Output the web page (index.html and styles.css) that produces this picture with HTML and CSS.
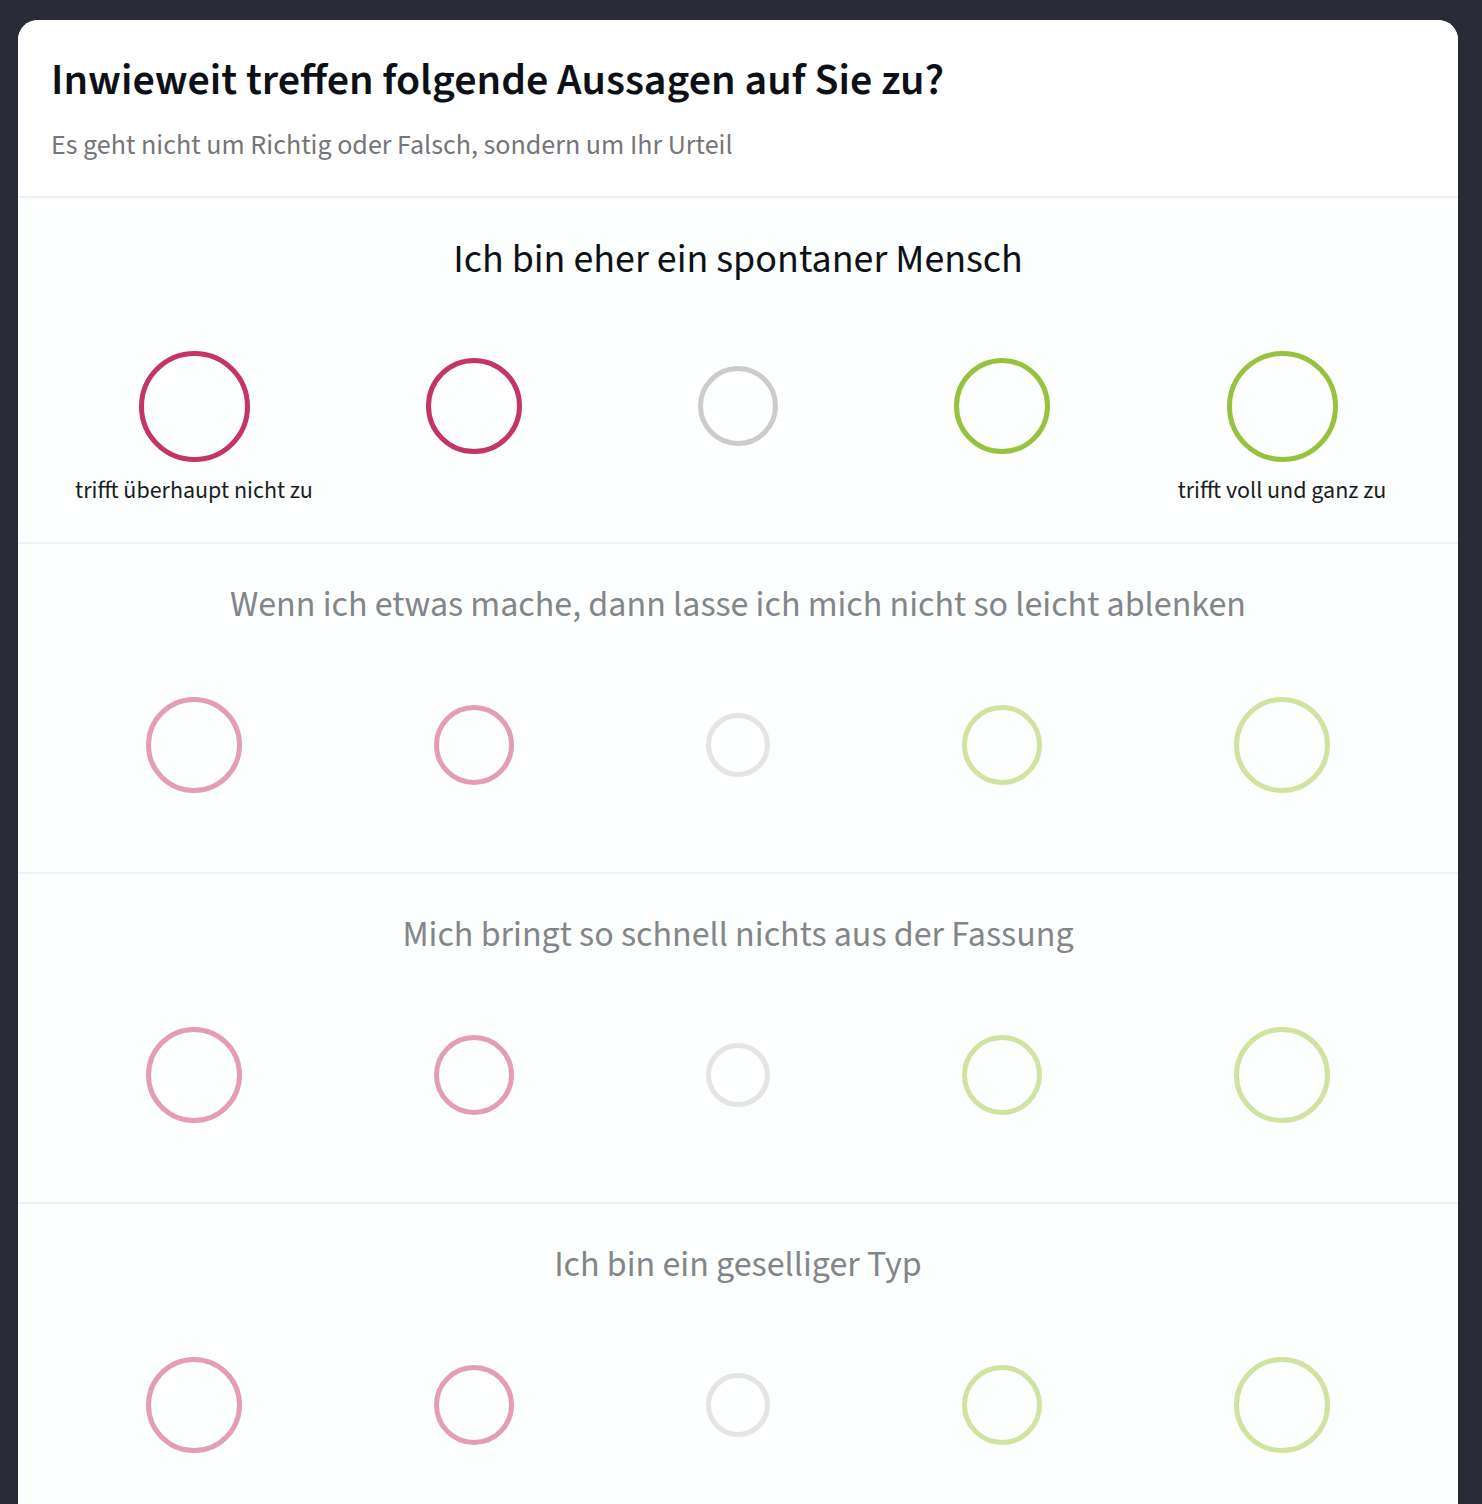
FILE: index.html
```html
<!DOCTYPE html>
<html lang="de">
<head>
<meta charset="utf-8">
<title>Fragebogen</title>
<link rel="stylesheet" href="styles.css">
</head>
<body>
<main class="card">
  <header class="card-head">
    <h1 class="title">Inwieweit treffen folgende Aussagen auf Sie zu?</h1>
    <p class="subtitle">Es geht nicht um Richtig oder Falsch, sondern um Ihr Urteil</p>
  </header>

  <section class="q q--active">
    <h2 class="q-text">Ich bin eher ein spontaner Mensch</h2>
    <div class="scale">
      <div class="opt"><div class="slot"><span class="ring ring--red ring--l"></span></div><span class="opt-label">trifft überhaupt nicht zu</span></div>
      <div class="opt"><div class="slot"><span class="ring ring--red ring--m"></span></div></div>
      <div class="opt"><div class="slot"><span class="ring ring--gray ring--s"></span></div></div>
      <div class="opt"><div class="slot"><span class="ring ring--green ring--m"></span></div></div>
      <div class="opt"><div class="slot"><span class="ring ring--green ring--l"></span></div><span class="opt-label">trifft voll und ganz zu</span></div>
    </div>
  </section>

  <section class="q">
    <h2 class="q-text">Wenn ich etwas mache, dann lasse ich mich nicht so leicht ablenken</h2>
    <div class="scale">
      <div class="opt"><div class="slot"><span class="ring ring--red ring--l"></span></div></div>
      <div class="opt"><div class="slot"><span class="ring ring--red ring--m"></span></div></div>
      <div class="opt"><div class="slot"><span class="ring ring--gray ring--s"></span></div></div>
      <div class="opt"><div class="slot"><span class="ring ring--green ring--m"></span></div></div>
      <div class="opt"><div class="slot"><span class="ring ring--green ring--l"></span></div></div>
    </div>
  </section>

  <section class="q">
    <h2 class="q-text">Mich bringt so schnell nichts aus der Fassung</h2>
    <div class="scale">
      <div class="opt"><div class="slot"><span class="ring ring--red ring--l"></span></div></div>
      <div class="opt"><div class="slot"><span class="ring ring--red ring--m"></span></div></div>
      <div class="opt"><div class="slot"><span class="ring ring--gray ring--s"></span></div></div>
      <div class="opt"><div class="slot"><span class="ring ring--green ring--m"></span></div></div>
      <div class="opt"><div class="slot"><span class="ring ring--green ring--l"></span></div></div>
    </div>
  </section>

  <section class="q">
    <h2 class="q-text">Ich bin ein geselliger Typ</h2>
    <div class="scale">
      <div class="opt"><div class="slot"><span class="ring ring--red ring--l"></span></div></div>
      <div class="opt"><div class="slot"><span class="ring ring--red ring--m"></span></div></div>
      <div class="opt"><div class="slot"><span class="ring ring--gray ring--s"></span></div></div>
      <div class="opt"><div class="slot"><span class="ring ring--green ring--m"></span></div></div>
      <div class="opt"><div class="slot"><span class="ring ring--green ring--l"></span></div></div>
    </div>
  </section>
</main>
</body>
</html>
```

FILE: styles.css
```css
html, body {
  margin: 0;
  padding: 0;
}

body {
  background: #292c37;
  font-family: "Source Sans Pro", "Source Sans 3", Lato, "Noto Sans", sans-serif;
  padding: 20px 24px 0 18px;
  height: 1504px;
  box-sizing: border-box;
  overflow: hidden;
}

.card {
  background: #fdfefe;
  border-radius: 20px 20px 0 0;
  min-height: 1600px;
  overflow: hidden;
}

.card-head {
  background: #ffffff;
  height: 176px;
  padding: 0 33px;
  border-bottom: 2px solid #f0f1f2;
  box-sizing: content-box;
  display: flex;
  flex-direction: column;
}

.title {
  margin: 35px 0 0;
  font-size: 44px;
  line-height: 52px;
  font-weight: 600;
  color: #0d1117;
}

.subtitle {
  margin: 21px 0 0;
  font-size: 28px;
  line-height: 34px;
  font-weight: 400;
  color: #747678;
}

.q {
  height: 330px;
  border-bottom: 2px solid #f0f1f2;
  box-sizing: border-box;
  padding-top: 39px;
}

.q--active {
  height: 346px;
  padding-top: 40px;
}

.q-text {
  margin: 0;
  text-align: center;
  font-size: 36px;
  line-height: 44px;
  font-weight: 400;
  color: #838689;
}

.q--active .q-text {
  font-size: 40px;
  color: #0d1117;
}

.scale {
  display: grid;
  grid-template-columns: 296px 264px 264px 264px 296px;
  justify-content: center;
  margin-top: 62px;
}

.q--active .scale {
  margin-top: 68px;
}

.opt {
  display: flex;
  flex-direction: column;
  align-items: center;
}

.slot {
  height: 112px;
  display: flex;
  align-items: center;
  justify-content: center;
}

.opt-label {
  margin-top: 14px;
  font-size: 24px;
  line-height: 30px;
  color: #1a1c1f;
  white-space: nowrap;
}

.ring {
  display: block;
  box-sizing: border-box;
  border-radius: 50%;
  border: 5px solid;
}

.ring--l { width: 96px; height: 96px; }
.ring--m { width: 80px; height: 80px; }
.ring--s { width: 64px; height: 64px; }

.q--active .ring--l { width: 111px; height: 111px; }
.q--active .ring--m { width: 96px; height: 96px; }
.q--active .ring--s { width: 80px; height: 80px; }

.ring--red { border-color: #e49db4; }
.ring--green { border-color: #cfe4a1; }
.ring--gray { border-color: #e5e5e5; }

.q--active .ring--red { border-color: #c63461; }
.q--active .ring--green { border-color: #97c23e; }
.q--active .ring--gray { border-color: #cccccc; }
```
